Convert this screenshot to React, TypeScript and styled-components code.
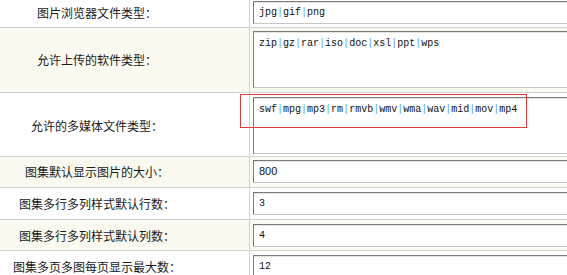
import React from 'react';
import styled, { createGlobalStyle } from 'styled-components';

const GlobalStyle = createGlobalStyle`
    html, body {
        margin: 0;
        padding: 0;
        background: #ffffff;
        overflow: hidden;
    }
`;

const Table = styled.div`
    width: 567px;
    font-family: 'Noto Sans CJK SC', 'Liberation Sans', sans-serif;
    font-size: 12px;
    color: #1a1a1a;
`;

const Row = styled.div<{ $alt?: boolean; $pad: string }>`
    display: grid;
    grid-template-columns: 250px 1fr;
    background: ${(p) => (p.$alt ? '#f9f9ef' : '#ffffff')};
    border-bottom: 1px solid #d2d2d2;

    > div {
        padding: ${(p) => p.$pad};
    }
`;

const Label = styled.div`
    display: flex;
    align-items: center;
    justify-content: center;
    padding-right: 55px !important;
    padding-left: 0 !important;
    border-right: 1px solid #d2d2d2;
    white-space: nowrap;
`;

const Cell = styled.div`
    position: relative;
    padding-left: 3px !important;
`;

const Field = styled.div<{ $tall?: boolean; $sans?: boolean }>`
    box-sizing: border-box;
    width: 340px;
    height: ${(p) => (p.$tall ? '57px' : '23px')};
    padding: ${(p) => (p.$tall ? '4px 5px' : '0 5px')};
    line-height: ${(p) => (p.$tall ? '15px' : '21px')};
    background: #ffffff;
    border: 1px solid;
    border-color: #7a7a7a #c6c6c6 #c6c6c6 #7a7a7a;
    box-shadow: inset 0 1px 0 #e4e4e4;
    font-family: ${(p) =>
        p.$sans ? "'Liberation Sans', Arial, sans-serif" : "'Liberation Mono', monospace"};
    font-size: ${(p) => (p.$sans ? '11px' : '10px')};
    color: #111111;
    white-space: nowrap;
`;

const Pipe = styled.span`
    color: #5aa2ec;
`;

const Marker = styled.div`
    position: absolute;
    left: -10px;
    top: 1px;
    width: 285px;
    height: 32px;
    border: 1px solid #e23a3a;
    pointer-events: none;
`;

const Piped = ({ text }: { text: string }) => {
    const parts = text.split('|');
    return (
        <>
            {parts.map((p, i) => (
                <React.Fragment key={i}>
                    {i > 0 && <Pipe>|</Pipe>}
                    {p}
                </React.Fragment>
            ))}
        </>
    );
};

const App = (): JSX.Element => (
    <>
        <GlobalStyle />
        <Table>
            <Row $pad="1px 0 3px">
                <Label>图片浏览器文件类型：</Label>
                <Cell>
                    <Field>
                        <Piped text="jpg|gif|png" />
                    </Field>
                </Cell>
            </Row>
            <Row $alt $pad="3px 0 4px">
                <Label>允许上传的软件类型：</Label>
                <Cell>
                    <Field $tall>
                        <Piped text="zip|gz|rar|iso|doc|xsl|ppt|wps" />
                    </Field>
                </Cell>
            </Row>
            <Row $pad="4px 0 2px">
                <Label>允许的多媒体文件类型：</Label>
                <Cell>
                    <Field $tall>
                        <Piped text="swf|mpg|mp3|rm|rmvb|wmv|wma|wav|mid|mov|mp4" />
                    </Field>
                    <Marker />
                </Cell>
            </Row>
            <Row $alt $pad="3px 0 4px">
                <Label>图集默认显示图片的大小：</Label>
                <Cell>
                    <Field $sans>800</Field>
                </Cell>
            </Row>
            <Row $pad="4px 0 4px">
                <Label>图集多行多列样式默认行数：</Label>
                <Cell>
                    <Field>3</Field>
                </Cell>
            </Row>
            <Row $alt $pad="4px 0 3px">
                <Label>图集多行多列样式默认列数：</Label>
                <Cell>
                    <Field>4</Field>
                </Cell>
            </Row>
            <Row $pad="4px 0 4px">
                <Label>图集多页多图每页显示最大数：</Label>
                <Cell>
                    <Field>12</Field>
                </Cell>
            </Row>
        </Table>
    </>
);

export default App;
